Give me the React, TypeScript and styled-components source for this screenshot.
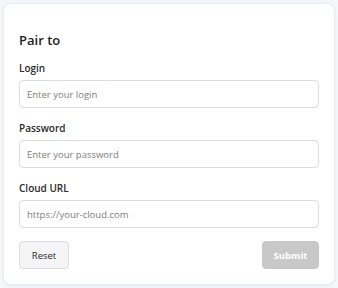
import React from "react";
import styled, { createGlobalStyle } from "styled-components";

const GlobalStyle = createGlobalStyle`
  html, body {
    margin: 0;
    padding: 0;
    background: #f4f6f9;
    font-family: "Open Sans", "Noto Sans", sans-serif;
  }
`;

const Page = styled.div`
  padding: 3px;
  box-sizing: border-box;
  width: 338px;
  height: 288px;
`;

const Card = styled.form`
  box-sizing: border-box;
  width: 332px;
  height: 282px;
  background: #ffffff;
  border: 1px solid #e9ecf0;
  border-radius: 8px;
  box-shadow: 0 1px 3px rgba(30, 40, 60, 0.06);
  padding: 27px 15px 16px;
  display: flex;
  flex-direction: column;
`;

const Title = styled.h2`
  margin: 0 0 12px;
  font-size: 13px;
  line-height: 18px;
  font-weight: 600;
  color: #222;
`;

const Field = styled.div`
  display: flex;
  flex-direction: column;
  margin-bottom: 13px;
`;

const Label = styled.label`
  font-size: 10px;
  line-height: 14px;
  font-weight: 600;
  color: #2a2a2a;
  margin-bottom: 5px;
`;

const Input = styled.input`
  box-sizing: border-box;
  height: 28px;
  width: 100%;
  border: 1px solid #d9dce1;
  border-radius: 4px;
  padding: 0 7px;
  font-family: inherit;
  font-size: 9.5px;
  color: #333;
  background: #fff;
  outline: none;

  &::placeholder {
    color: #7d7d7d;
  }
`;

const Actions = styled.div`
  display: flex;
  justify-content: space-between;
`;

const Button = styled.button<{ $primary?: boolean }>`
  box-sizing: border-box;
  height: 28px;
  border-radius: 4px;
  font-family: inherit;
  font-size: 9.5px;
  cursor: pointer;
  padding: 0;
  width: ${(p) => (p.$primary ? "57px" : "50px")};
  font-weight: ${(p) => (p.$primary ? 700 : 400)};
  color: ${(p) => (p.$primary ? "#ffffff" : "#2a2a2a")};
  background: ${(p) => (p.$primary ? "#c8c8c8" : "#f5f5f7")};
  border: 1px solid ${(p) => (p.$primary ? "#c8c8c8" : "#dcdde1")};
`;

export default function App() {
  return (
    <Page>
      <GlobalStyle />
      <Card onSubmit={(e) => e.preventDefault()}>
        <Title>Pair to</Title>
        <Field>
          <Label>Login</Label>
          <Input placeholder="Enter your login" />
        </Field>
        <Field>
          <Label>Password</Label>
          <Input type="password" placeholder="Enter your password" />
        </Field>
        <Field>
          <Label>Cloud URL</Label>
          <Input placeholder="https://your-cloud.com" />
        </Field>
        <Actions>
          <Button type="button">Reset</Button>
          <Button $primary disabled type="submit">
            Submit
          </Button>
        </Actions>
      </Card>
    </Page>
  );
}
